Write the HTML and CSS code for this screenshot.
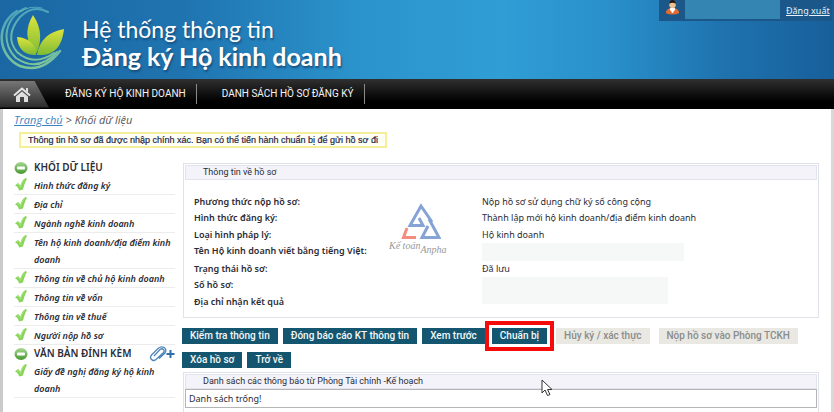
FILE: index.html
```html
<!DOCTYPE html>
<html lang="vi">
<head>
<meta charset="utf-8">
<title>Đăng ký Hộ kinh doanh</title>
<link rel="stylesheet" href="styles.css">
</head>
<body>
<svg class="defs" aria-hidden="true">
  <defs>
    <linearGradient id="leaf" x1="0" y1="0" x2="0" y2="1"><stop offset="0" stop-color="#dde43c"/><stop offset="1" stop-color="#7dbb35"/></linearGradient>
    <linearGradient id="swirl" x1="0" y1="0" x2="0" y2="1"><stop offset="0" stop-color="#4ba3bd"/><stop offset="1" stop-color="#7ec49a"/></linearGradient>
    <linearGradient id="green" x1="0" y1="0" x2="0" y2="1"><stop offset="0" stop-color="#a5d890"/><stop offset="1" stop-color="#46982f"/></linearGradient>
    <symbol id="check" viewBox="0 0 13 14"><path d="M.5 8.500 3.500 6l2.500 2.500C7 5 8.500 2.500 11 1l1.500 1C10.500 5 9.500 8.500 8.500 12.500L4.500 13.500C4 11 3 9.500 .5 8.500z" fill="#86d556"/><path d="M2.500 8 4 7l2 3.500c1-3.500 2-6 4.500-8" fill="none" stroke="#a9e380"/></symbol>
    <symbol id="minus" viewBox="0 0 14 14"><ellipse cx="7" cy="7" rx="6.500" ry="6" fill="url(#green)"/><rect x="3" y="5.500" width="8" height="3" rx="1" fill="#fff"/></symbol>
  </defs>
</svg>
<header class="banner">
  <svg class="logo" viewBox="0 0 68 74" aria-hidden="true">
    <g fill="none" stroke="url(#swirl)" stroke-linecap="round">
      <path d="M17 11A31 31 0 0 0 20 66Q42 74 60 51" stroke-width="2.500"/>
      <path d="M26 8A30 30 0 0 0 16 58Q38 73 57 52" stroke-width="2"/>
      <path d="M48 12Q33 4 20 17Q4 36 17 52Q34 67 54 53" stroke-width="2"/>
      <path d="M42 8Q29 5 20 12" stroke-width="1"/>
    </g>
    <g fill="url(#leaf)">
      <path d="M33 15C42 28 42 42 36 54 25 42 25 28 33 15z"/>
      <path d="M64 29C62 47 54 56 37 55 39 42 47 32 64 29z"/>
      <path d="M17 37C29 38 36 44 36 55 24 55 18 49 17 37z"/>
    </g>
  </svg>
  <h1 class="title"><span class="title-top">Hệ thống thông tin</span><span class="title-main">Đăng ký Hộ kinh doanh</span></h1>
  <div class="account">
    <svg class="user" viewBox="0 0 16 16" aria-hidden="true"><path d="M1 14C1 10 4 8.500 8 8.500s7 1.500 7 5.500q-7 3-14 0z" fill="#e46b32"/><path d="M6 8h4l1 2-3 4-3-4z" fill="#fff"/><circle cx="8" cy="5" r="3.500" fill="#f0c08c"/><path d="M4.500 4Q5 0 8 0t3.500 4Q8 2 4.500 4z" fill="#241713"/></svg>
    <span class="account-name"></span>
    <a class="logout" href="#">Đăng xuất</a>
  </div>
</header>
<nav class="nav">
  <a class="home" href="#" aria-label="Trang chủ"><svg viewBox="0 0 18 16" aria-hidden="true"><path d="M1 8.500 9 1.500l8 7" fill="none" stroke="#e4e4e4" stroke-width="2"/><path d="M3 9.500 9 4.500l6 5V15h-4v-5H7v5H3zM13 1h2v5l-2-2z" fill="#dedede"/></svg></a>
  <a class="nav-link" href="#">ĐĂNG KÝ HỘ KINH DOANH</a>
  <a class="nav-link" href="#">DANH SÁCH HỒ SƠ ĐĂNG KÝ</a>
</nav>
<div class="page">
  <div class="crumbs"><a href="#">Trang chủ</a> &gt; Khối dữ liệu</div>
  <p class="notice">Thông tin hồ sơ đã được nhập chính xác. Bạn có thể tiến hành chuẩn bị để gửi hồ sơ đi</p>
  <div class="columns">
    <aside class="side">
      <h2><svg class="ico"><use href="#minus"/></svg>KHỐI DỮ LIỆU</h2>
      <ul>
        <li><svg class="ico"><use href="#check"/></svg><a href="#">Hình thức đăng ký</a></li>
        <li><svg class="ico"><use href="#check"/></svg><a href="#">Địa chỉ</a></li>
        <li><svg class="ico"><use href="#check"/></svg><a href="#">Ngành nghề kinh doanh</a></li>
        <li><svg class="ico"><use href="#check"/></svg><a href="#">Tên hộ kinh doanh/địa điểm kinh doanh</a></li>
        <li><svg class="ico"><use href="#check"/></svg><a href="#">Thông tin về chủ hộ kinh doanh</a></li>
        <li><svg class="ico"><use href="#check"/></svg><a href="#">Thông tin về vốn</a></li>
        <li><svg class="ico"><use href="#check"/></svg><a href="#">Thông tin về thuế</a></li>
        <li><svg class="ico"><use href="#check"/></svg><a href="#">Người nộp hồ sơ</a></li>
      </ul>
      <h2><svg class="ico"><use href="#minus"/></svg>VĂN BẢN ĐÍNH KÈM
        <svg class="clip" viewBox="0 0 26 16" aria-hidden="true"><path d="M5 10 11 3.500Q13 2 14.500 3.500T14 7L7 13.500Q4.500 15.500 2.500 13.500T2.500 9L9 2.500Q12 0 15 1.500T16 7L10 12.500" fill="none" stroke="#4d86ba" stroke-width="1.300"/><path d="M17.500 8h8M21.500 4v8" stroke="#2f6fa8" stroke-width="2"/></svg>
      </h2>
      <ul>
        <li><svg class="ico"><use href="#check"/></svg><a href="#">Giấy đề nghị đăng ký hộ kinh doanh</a></li>
      </ul>
    </aside>
    <main class="main">
      <section class="panel">
        <h3>Thông tin về hồ sơ</h3>
        <dl class="facts">
          <dt>Phương thức nộp hồ sơ:</dt><dd>Nộp hồ sơ sử dụng chữ ký số công cộng</dd>
          <dt>Hình thức đăng ký:</dt><dd>Thành lập mới hộ kinh doanh/địa điểm kinh doanh</dd>
          <dt>Loại hình pháp lý:</dt><dd>Hộ kinh doanh</dd>
          <dt>Tên Hộ kinh doanh viết bằng tiếng Việt:</dt><dd><span class="mask"></span></dd>
          <dt>Trạng thái hồ sơ:</dt><dd>Đã lưu</dd>
          <dt>Số hồ sơ:</dt><dd class="tall"><span class="mask mask-tall"></span></dd>
          <dt>Địa chỉ nhận kết quả</dt>
        </dl>
        <div class="watermark">
          <svg viewBox="0 0 40 38" aria-hidden="true"><g fill="none" stroke="#86a3d6" stroke-width="3"><path d="M31 20 20 4 9 23.500H22L18 16"/><path d="M28 17 38 35.500H21L27 24"/><path d="M6 26 2.500 35.500H15" stroke="#f28d80"/></g></svg>
          <span class="script"><i>Kế toán</i><i class="drop">Anpha</i></span>
        </div>
      </section>
      <div class="actions">
        <button>Kiểm tra thông tin</button>
        <button>Đóng báo cáo KT thông tin</button>
        <button>Xem trước</button>
        <button class="marked">Chuẩn bị</button>
        <button class="off" disabled>Hủy ký / xác thực</button>
        <button class="off" disabled>Nộp hồ sơ vào Phòng TCKH</button>
      </div>
      <div class="actions second">
        <button>Xóa hồ sơ</button>
        <button>Trở về</button>
      </div>
      <section class="panel messages">
        <h3>Danh sách các thông báo từ Phòng Tài chính -Kế hoạch</h3>
        <p class="empty">Danh sách trống!</p>
        <svg class="pointer" viewBox="0 0 12 18" aria-hidden="true"><path d="M1 1v13l3-3 2.500 5.500 2.500-1L6.500 10.500H11z" fill="#fff" stroke="#333"/></svg>
      </section>
    </main>
  </div>
</div>
</body>
</html>
```

FILE: styles.css
```css
* { box-sizing: border-box; }
html, body { height: 100%; }
body {
  margin: 0;
  display: flex;
  flex-direction: column;
  font: 9px/16px "Noto Sans", "Open Sans", sans-serif;
  color: #2b2b35;
  background: #fff;
}
h1, h2, h3, p, ul, dl, dd { margin: 0; padding: 0; }
a { color: inherit; }
svg { display: block; }
.defs { position: absolute; width: 0; height: 0; }

.banner {
  flex: none;
  display: flex;
  height: 79px;
  background: linear-gradient(90deg, #1a67a3 0%, #1f74b0 22%, #2b93cb 43%, #309dd5 60%, #2990ca 73%, #1e72ae 87%, #175f9b 100%);
}
.logo { width: 68px; height: 74px; }
.title {
  flex: 1;
  padding: 16px 0 0 14px;
  color: #fff;
  font: 23px/27px Lato, sans-serif;
  text-shadow: 1px 2px 2px #174e7c;
}
.title span { display: block; white-space: nowrap; }
.title .title-main { font-size: 25px; font-weight: 700; }
.account {
  display: flex;
  align-items: flex-start;
  width: 173px;
  height: 21px;
  margin-right: 2px;
  padding-left: 6px;
  background: #1b5788;
}
.user { width: 15px; height: 15px; }
.account-name { width: 95px; height: 19px; margin: 0 6px 0 5px; background: #3585b3; }
.logout { color: #e6f2fb; line-height: 21px; white-space: nowrap; }

.nav {
  flex: none;
  display: flex;
  align-items: center;
  height: 30px;
  background: linear-gradient(#303030, #000 75%);
}
.home {
  width: 49px;
  height: 27px;
  padding: 6px 0 0 13px;
  background: linear-gradient(#777, #292929);
  clip-path: polygon(0 0, 70% 0, 100% 100%, 0 100%);
}
.home svg { width: 18px; height: 16px; }
.nav-link {
  margin-left: 16px;
  padding-right: 10px;
  border-right: 1px solid #8a8a8a;
  color: #f4f4f4;
  font: 10px/20px Roboto, sans-serif;
  text-decoration: none;
  white-space: nowrap;
}
.nav-link + .nav-link { margin-left: 25px; }

.page {
  flex: 1;
  min-height: 0;
  padding: 3px 12px 0 11px;
  border-left: 3px solid #cbcbcb;
  border-right: 3px solid #d8d8d8;
}
.crumbs { color: #555; font: italic 11px/16px "Open Sans", sans-serif; }
.crumbs a { color: #3b83c0; }
.notice {
  width: max-content;
  margin: 4px 0 0 5px;
  padding: 0 7px;
  border: 2px solid #f7ee9c;
  background: #fffff4;
  color: #26264a;
  font: 9px/12px "Liberation Sans", sans-serif;
  -webkit-text-stroke: 0.2px;
}
.columns { display: flex; gap: 8px; margin-top: 11px; }
.side { flex: none; width: 161px; }
.side h2 {
  display: flex;
  align-items: center;
  font-size: 10px;
  font-weight: 600;
  line-height: 17px;
  white-space: nowrap;
}
.side ul { list-style: none; }
.side li {
  display: flex;
  border-bottom: 1px solid #ececec;
  font-style: italic;
  font-weight: 600;
  line-height: 17px;
  padding-top: 1px;
}
.side li a { text-decoration: none; }
.ico { flex: none; width: 14px; height: 14px; margin-right: 6px; }
.clip { width: 26px; height: 16px; margin-left: auto; }

.main { flex: 1; min-width: 0; padding-top: 4px; }
.panel { position: relative; border: 1px solid #dfe3e8; padding: 1px; }
.panel h3 {
  padding-left: 17px;
  border: 1px solid #e1e3ee;
  background: #f3f3f9;
  font: 400 9px/13px Roboto, sans-serif;
}
.facts {
  display: grid;
  grid-template-columns: 288px 1fr;
  grid-template-rows: repeat(7, 1fr);
  height: 116px;
  margin: 14px 9px 6px;
}
.facts dt { grid-column: 1; font-weight: 600; }
.facts dd { grid-column: 2; }
.facts .tall { grid-row: span 2; }
.mask { display: block; width: 202px; height: 18px; background: #f6f7f7; }
.mask-tall { width: 186px; height: 27px; }
.watermark { position: absolute; left: 205px; top: 38px; width: 66px; color: #999; }
.watermark svg { width: 40px; height: 38px; margin-left: 12px; }
.script { display: flex; font: italic 10px/12px "Liberation Serif", serif; }
.drop { padding-top: 4px; }

.actions { display: flex; gap: 5px; margin: 10px 0 0 -1px; }
.actions.second { margin: 8px 0 4px -1px; }
.actions button {
  margin: 0;
  padding: 0 8px;
  border: 0;
  background: #14566f;
  color: #f4f8fa;
  font: 500 10px/16px Roboto, sans-serif;
  white-space: nowrap;
}
.actions .marked { margin-left: 2px; outline: 4px solid #f60b0b; outline-offset: 3px; }
.actions .off { margin-left: 4px; background: #e9e8e2; color: #8b8c8c; }
.messages { border-bottom: 0; padding-bottom: 4px; }
.empty { padding: 0 3px; border: 1px solid #b5b5b5; line-height: 17px; }
.pointer { position: absolute; left: 357px; top: 6px; width: 12px; height: 18px; }
```
